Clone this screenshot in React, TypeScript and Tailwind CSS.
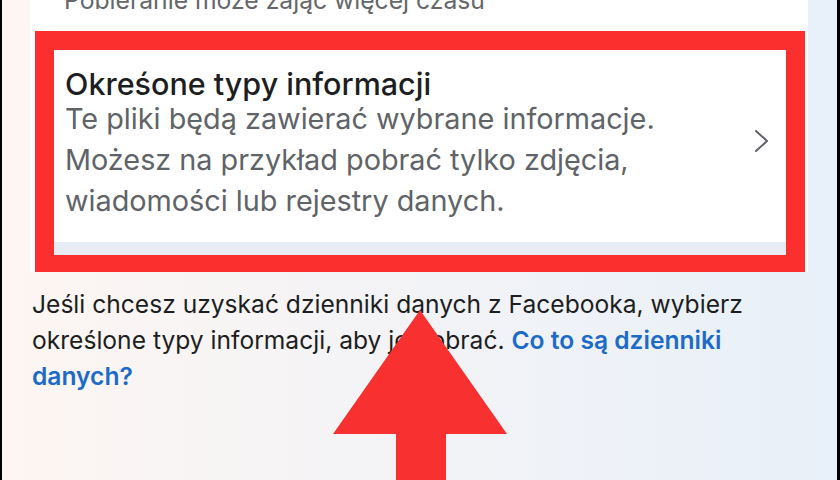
import React from "react";

export default function App() {
  return (
    <div
      className="relative flex h-[480px] w-[840px] overflow-hidden"
      style={{ fontFamily: "Inter, 'Noto Sans', sans-serif" }}
    >
      <div className="w-[2px] shrink-0 bg-black" />
      <div className="flex flex-1 flex-col bg-gradient-to-r from-[#fdf6f3] to-[#e8f0f9]">
        <div className="ml-[28px] w-[778px] bg-white">
          <div className="mt-[-15px] h-[30px] pl-[34px] text-[24.7px] leading-[30px] text-[#65676b] whitespace-nowrap">
            Pobieranie może zająć więcej czasu
          </div>
          <div className="ml-[5px] mt-[16px] w-[770px] border-[19px] border-b-[17px] border-[#fc2f2f]">
            <div className="flex items-center bg-white pb-[21px] pl-[11px] pr-[17px] pt-[19px]">
              <div className="flex-1">
                <div className="text-[30.5px] font-medium leading-[29px] text-[#1c1e21]">
                  Okreśone typy informacji
                </div>
                <div className="text-[28.8px] leading-[41px] text-[#606368]">
                  <div>Te pliki będą zawierać wybrane informacje.</div>
                  <div>Możesz na przykład pobrać tylko zdjęcia,</div>
                  <div>wiadomości lub rejestry danych.</div>
                </div>
              </div>
              <svg
                width="16"
                height="24"
                viewBox="0 0 16 24"
                className="mt-[-8px]"
              >
                <path
                  d="M3 2 L14 12 L3 22"
                  fill="none"
                  stroke="#5f6166"
                  strokeWidth="2"
                  strokeLinecap="round"
                  strokeLinejoin="round"
                />
              </svg>
            </div>
            <div className="h-[13px] bg-[#e8edf5]" />
          </div>
        </div>
        <div className="ml-[30px] mt-[14px] text-[24.6px] leading-[36px] text-[#1c1e21]">
          <div>Jeśli chcesz uzyskać dzienniki danych z Facebooka, wybierz</div>
          <div>
            określone typy informacji, aby je pobrać.{" "}
            <span className="font-semibold text-[#1d6bc8]">Co to są dzienniki</span>
          </div>
          <div className="font-semibold text-[#1d6bc8]">danych?</div>
        </div>
      </div>
      <div className="w-[3px] shrink-0 bg-black" />
      <svg
        className="pointer-events-none absolute left-0 top-0"
        width="840"
        height="480"
        viewBox="0 0 840 480"
      >
        <polygon
          points="420,310 507,434 446,434 446,480 396,480 396,434 333,434"
          fill="#f83030"
        />
      </svg>
    </div>
  );
}
